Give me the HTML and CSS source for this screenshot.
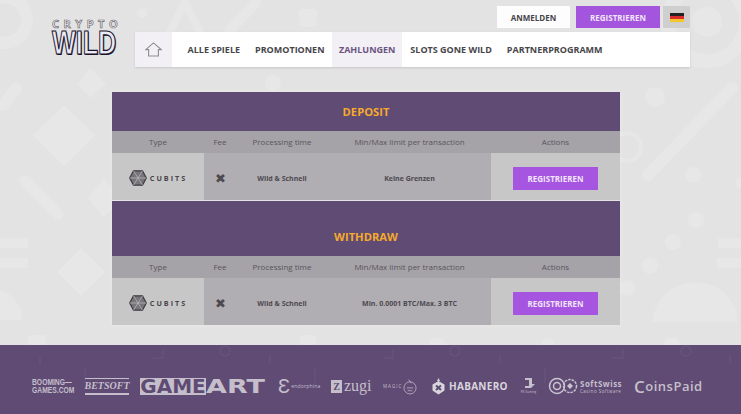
FILE: index.html
```html
<!DOCTYPE html>
<html>
  <head>
    <title>Crypto Wild - Zahlungen</title>
    <link rel="stylesheet" href="styles.css">
  </head>
  <body>
    <!-- faint shapes behind the page -->
    <svg class="bg-shapes" viewBox="0 0 741 345" width="741" height="345" fill="#e7e7e7" stroke="none">
      <!-- top left -->
      <circle cx="4" cy="20" r="23" fill="none" stroke="#e7e7e7" stroke-width="12"/>
      <circle cx="142" cy="13" r="5"/>
      <path d="M185 3 L216 62 L154 62 Z" fill="none" stroke="#e7e7e7" stroke-width="8"/>
      <rect x="299" y="9" width="18" height="18" rx="4"/>
      <path d="M256 3 L230 30" stroke="#e7e7e7" stroke-width="10" stroke-linecap="round"/>
      <circle cx="273" cy="83" r="8"/>
      <path d="M90 68 L106 84 L90 98 L78 84 Z"/>
      <!-- left column -->
      <path d="M3 105 L16 89" stroke="#e7e7e7" stroke-width="12" stroke-linecap="round"/>
      <path d="M64 105 L95 135 L64 166 L33 135 Z"/>
      <path d="M25 181 L58 214" stroke="#e7e7e7" stroke-width="11" stroke-linecap="round"/>
      <path d="M104 178 L122 198 L104 218 L88 198 Z"/>
      <rect x="0" y="238" width="28" height="10"/>
      <rect x="0" y="258" width="28" height="10"/>
      <path d="M81 248 L105 272 L81 296 L57 272 Z"/>
      <path d="M0 290 C14 294 22 306 22 320 H0 Z"/>
      <rect x="28" y="335" width="18" height="10" rx="3"/>
      <!-- right column -->
      <circle cx="707" cy="22" r="39" fill="none" stroke="#e7e7e7" stroke-width="14"/>
      <circle cx="707" cy="22" r="15"/>
      <circle cx="655" cy="97" r="10"/>
      <path d="M648 175 L732 88" stroke="#e7e7e7" stroke-width="12" stroke-linecap="round"/>
      <circle cx="627" cy="147" r="14" fill="none" stroke="#e7e7e7" stroke-width="4"/>
      <circle cx="693" cy="175" r="8"/>
      <circle cx="741" cy="183" r="6"/>
      <circle cx="696" cy="220" r="8"/>
      <circle cx="673" cy="242" r="8"/>
      <circle cx="650" cy="266" r="8"/>
      <circle cx="627" cy="288" r="8"/>
      <rect x="718" y="238" width="23" height="10"/>
      <rect x="717" y="258" width="24" height="10"/>
      <path d="M653 322 A42 39 0 0 1 738 322 Z"/>
      <circle cx="672" cy="345" r="8"/>
      <!-- under the tables -->
      <circle cx="437" cy="345" r="8"/>
      <circle cx="548" cy="345" r="7"/>
      <rect x="300" y="335" width="16" height="10" rx="3"/>
    </svg>

    <header class="site-header">
      <div class="logo">
        <div class="logo-top">CRYPTO</div>
        <div class="logo-wild">WILD</div>
      </div>
      <div class="header-right">
        <div class="top-bar">
          <a class="btn btn-login">ANMELDEN</a>
          <a class="btn btn-register">REGISTRIEREN</a>
          <div class="lang-box"><div class="flag"></div></div>
        </div>
        <nav class="main-nav">
          <a class="nav-home">
            <svg width="17" height="15" viewBox="0 0 17 15" fill="none" stroke="#8f8c94" stroke-width="1.1">
              <path d="M0.8 7.6 L8.5 0.9 L16.2 7.6 H13.4 V14 H3.6 V7.6 Z"/>
            </svg>
          </a>
          <div class="nav-links">
            <a class="nav-link">ALLE SPIELE</a>
            <a class="nav-link">PROMOTIONEN</a>
            <a class="nav-link nav-active">ZAHLUNGEN</a>
            <a class="nav-link">SLOTS GONE WILD</a>
            <a class="nav-link">PARTNERPROGRAMM</a>
          </div>
        </nav>
      </div>
    </header>

    <main class="payments">
      <h2 class="section-title deposit-title">DEPOSIT</h2>
      <div class="table-head">
        <div>Type</div>
        <div>Fee</div>
        <div>Processing time</div>
        <div>Min/Max limit per transaction</div>
        <div>Actions</div>
      </div>
      <div class="table-row">
        <div class="cell-type">
          <svg class="cubits-icon" width="18" height="16" viewBox="0 0 18 16">
            <path d="M4.5 0.8 H13.5 L17.3 8 L13.5 15.2 H4.5 L0.7 8 Z" fill="#77747a" stroke="#3f3d42" stroke-width="1.3"/>
            <path d="M9 8 L4.5 0.8 M9 8 L13.5 0.8 M9 8 H17.3 M9 8 L13.5 15.2 M9 8 L4.5 15.2 M9 8 H0.7" stroke="#b9b7bb" stroke-width="0.8"/>
          </svg>
          <span class="cubits-name">CUBITS</span>
        </div>
        <div class="cell-fee">✖</div>
        <div class="cell-text">Wild &amp; Schnell</div>
        <div class="cell-text">Keine Grenzen</div>
        <div class="cell-action"><a class="btn btn-register btn-table">REGISTRIEREN</a></div>
      </div>

      <h2 class="section-title withdraw-title">WITHDRAW</h2>
      <div class="table-head">
        <div>Type</div>
        <div>Fee</div>
        <div>Processing time</div>
        <div>Min/Max limit per transaction</div>
        <div>Actions</div>
      </div>
      <div class="table-row">
        <div class="cell-type">
          <svg class="cubits-icon" width="18" height="16" viewBox="0 0 18 16">
            <path d="M4.5 0.8 H13.5 L17.3 8 L13.5 15.2 H4.5 L0.7 8 Z" fill="#77747a" stroke="#3f3d42" stroke-width="1.3"/>
            <path d="M9 8 L4.5 0.8 M9 8 L13.5 0.8 M9 8 H17.3 M9 8 L13.5 15.2 M9 8 L4.5 15.2 M9 8 H0.7" stroke="#b9b7bb" stroke-width="0.8"/>
          </svg>
          <span class="cubits-name">CUBITS</span>
        </div>
        <div class="cell-fee">✖</div>
        <div class="cell-text">Wild &amp; Schnell</div>
        <div class="cell-text">Min. 0.0001 BTC/Max. 3 BTC</div>
        <div class="cell-action"><a class="btn btn-register btn-table">REGISTRIEREN</a></div>
      </div>
    </main>

    <footer class="providers">
      <svg class="footer-shapes" viewBox="0 0 741 69" width="741" height="69" fill="none" stroke="#67537b" stroke-width="1.5">
        <circle cx="225" cy="6" r="5"/>
        <circle cx="455" cy="6" r="5"/>
        <circle cx="686" cy="6" r="5"/>
        <path d="M163 5 V13 H153 M393 5 V13 H383 M623 5 V13 H613"/>
        <path d="M85 22 V38 M315 22 V38 M545 22 V38 M40 12 V20 M270 10 V18 M500 10 V18 M730 10 V18"/>
      </svg>
      <div class="booming">BOOMING—<br>GAMES.COM</div>
      <div class="betsoft">BETSOFT</div>
      <div class="gameart"><span class="game-box">GAME</span><span class="art">ART</span></div>
      <div class="endorphina"><span class="endo-mark">Ɛ</span><span>endorphina</span></div>
      <div class="zugi"><span class="zugi-mark">Z</span><span>zugi</span></div>
      <div class="magic">
        <span>MAGIC</span>
        <svg width="14" height="17" viewBox="0 0 15 17" fill="none" stroke="#c5bfcc" stroke-width="0.8">
          <circle cx="7.5" cy="10" r="6.5"/>
          <path d="M4 10 H11 M5 13 H10 M6 1 L9 5"/>
        </svg>
      </div>
      <div class="habanero">
        <svg width="13" height="17" viewBox="0 0 13 17">
          <path d="M6.5 0 L8 3 H5 Z M6.5 3 L12.5 6.5 V12.5 L6.5 16.5 L0.5 12.5 V6.5 Z" fill="#d9d5dd"/>
          <path d="M4 7.5 L9 12 M9 7.5 L4 12" stroke="#5f4b73" stroke-width="2"/>
        </svg>
        <span>HABANERO</span>
      </div>
      <div class="rk">
        <svg width="14" height="13" viewBox="0 0 14 13" fill="#c5bfcc">
          <path d="M3 0 H10 V6 H13 L9 10 H3 V8 H7 V2 H3 Z"/>
        </svg>
        <span>RK Gaming</span>
      </div>
      <div class="softswiss">
        <svg width="30" height="18" viewBox="0 0 30 18" fill="none" stroke="#c9c4cf" stroke-width="1.5">
          <circle cx="9" cy="9" r="7.5"/>
          <circle cx="9" cy="9" r="3.5"/>
          <circle cx="22" cy="9" r="6.5" stroke-dasharray="2.5 1"/>
          <path d="M22 6 L25 9 L22 12 L19 9 Z" fill="#c9c4cf" stroke="none"/>
        </svg>
        <div class="soft-text">SoftSwiss<small>Casino Software</small></div>
      </div>
      <div class="coinspaid"><span class="coins-c">C</span>oinsPaid</div>
    </footer>
  </body>
</html>
```

FILE: styles.css
```css
html,
body {
  margin: 0;
  padding: 0;
}

body {
  position: relative;
  width: 741px;
  height: 414px;
  overflow: hidden;
  background-color: #e3e3e3;
  font-family: "Open Sans", "Liberation Sans", sans-serif;
  color: #47454a;
}

.bg-shapes {
  position: absolute;
  top: 0;
  left: 0;
}

/* Header */
.site-header {
  position: relative;
  display: flex;
  height: 92px;
  padding: 6px 51px 0 52px;
  box-sizing: border-box;
}

.logo {
  width: 83px;
  padding-top: 12px;
}

.logo-top {
  font-size: 11px;
  line-height: 11px;
  letter-spacing: 4.5px;
  color: #ececec;
  font-weight: 700;
  -webkit-text-stroke: 0.6px #5f5b66;
}

.logo-wild {
  width: 87px;
  font-family: "Liberation Sans", sans-serif;
  font-size: 34px;
  line-height: 26px;
  font-weight: 700;
  color: #ece9f6;
  -webkit-text-stroke: 1.2px #17122a;
  text-shadow: 1px 1px 0 #17122a;
  transform: scaleX(0.74);
  transform-origin: left center;
}

.header-right {
  flex: 1;
}

.top-bar {
  display: flex;
  justify-content: flex-end;
  height: 22px;
  margin-bottom: 4px;
}

.btn {
  display: flex;
  align-items: center;
  justify-content: center;
  font-size: 8px;
  font-weight: 700;
  box-sizing: border-box;
}

.btn-login {
  width: 73px;
  margin-right: 6px;
  background-color: #fdfdfd;
  color: #47454a;
}

.btn-register {
  background-color: #a455dd;
  color: #f0e4f9;
}

.top-bar .btn-register {
  width: 84px;
  margin-right: 3px;
}

.lang-box {
  display: flex;
  align-items: center;
  justify-content: center;
  width: 27px;
  background-color: #cfcfcf;
}

.flag {
  width: 14px;
  height: 9px;
  background: linear-gradient(#222 0 33%, #d92c2c 33% 66%, #f5c52c 66%);
}

.main-nav {
  display: flex;
  height: 35px;
  background-color: #fff;
  box-shadow: 0 1px 2px rgba(0, 0, 0, 0.12);
}

.nav-home {
  display: flex;
  align-items: center;
  justify-content: center;
  width: 37px;
  margin-right: 1px;
  background-color: #f2f0f5;
}

.nav-links {
  display: flex;
  padding-left: 7px;
}

.nav-link {
  display: flex;
  align-items: center;
  padding: 0 7.5px;
  font-size: 9px;
  font-weight: 700;
  color: #47454a;
}

.nav-active {
  padding: 0 7px;
  margin-right: 0.5px;
  background-color: #f2f0f5;
  color: #6b5382;
}

/* Payment tables */
.payments {
  position: relative;
  width: 508px;
  margin-left: 112px;
  box-shadow: 0 0 5px rgba(255, 255, 255, 0.3);
}

.section-title {
  margin: 0;
  display: flex;
  justify-content: center;
  font-size: 11.2px;
  font-weight: 700;
  color: #f5aa2c;
  background-color: #5f4b73;
}

.deposit-title {
  height: 39px;
  line-height: 39px;
}

.withdraw-title {
  height: 55px;
  margin-top: 1px;
  line-height: 71px;
}

.table-head,
.table-row {
  display: grid;
  grid-template-columns: 92px 32px 92px 163px 129px;
  text-align: center;
}

.table-head {
  height: 22px;
  line-height: 21px;
  font-size: 8px;
  color: #59565c;
  background-color: #a5a2a8;
}

.table-row {
  height: 47px;
  background-color: #b0adb3;
}

.table-row > div {
  display: flex;
  align-items: center;
  justify-content: center;
  padding-top: 3px;
  box-sizing: border-box;
}

.cell-type,
.cell-action {
  background-color: #c7c7c7;
}

.cubits-icon {
  margin-right: 3px;
}

.cubits-name {
  font-size: 7.2px;
  font-weight: 700;
  letter-spacing: 2px;
  color: #47454a;
}

.cell-fee {
  font-size: 13px;
  color: #4d4a50;
}

.cell-text {
  font-size: 7px;
  font-weight: 700;
  color: #4d4a50;
}

.btn-table {
  width: 85px;
  height: 23px;
  background-color: #a655e0;
}

/* Provider logos */
.providers {
  position: absolute;
  left: 0;
  right: 0;
  top: 345px;
  height: 69px;
  box-sizing: border-box;
  display: flex;
  align-items: center;
  padding: 13px 0 0 32px;
  gap: 11px;
  background-color: #5f4b73;
  color: #c5bfcc;
}

.footer-shapes {
  position: absolute;
  top: 0;
  left: 0;
}

.providers > div {
  position: relative;
  display: flex;
  align-items: center;
  flex: none;
}

.providers > .booming {
  display: block;
  width: 42px;
  font-family: "Liberation Sans", sans-serif;
  font-size: 9px;
  line-height: 8.5px;
  font-weight: 700;
  white-space: nowrap;
  transform: scaleX(0.75);
  transform-origin: left center;
}

.betsoft {
  width: 44px;
  height: 17px;
  box-sizing: border-box;
  justify-content: center;
  font-family: "Liberation Serif", serif;
  font-size: 10px;
  font-style: italic;
  font-weight: 700;
  border-top: 1px solid #c5bfcc;
  border-bottom: 2px solid #c5bfcc;
}

.gameart {
  width: 127px;
  height: 17px;
  font-family: "DejaVu Sans", sans-serif;
  font-size: 20px;
  font-weight: 700;
  color: #c5bfcc;
}

.game-box {
  display: block;
  width: 66px;
  height: 17px;
  line-height: 17px;
  text-align: center;
  background-color: #c5bfcc;
  color: #5f4b73;
}

.art {
  display: block;
  transform: scaleX(1.35);
  transform-origin: left center;
}

.endorphina {
  width: 42px;
  font-size: 5px;
  letter-spacing: 0.2px;
}

.endo-mark {
  font-size: 20px;
  line-height: 18px;
  margin-right: 1px;
  font-weight: 400;
}

.zugi {
  width: 41px;
  font-family: "Liberation Serif", serif;
  font-size: 16px;
}

.zugi-mark {
  display: block;
  width: 11px;
  height: 13px;
  line-height: 13px;
  margin-right: 2px;
  text-align: center;
  font-size: 10px;
  font-weight: 700;
  background-color: #c5bfcc;
  color: #5f4b73;
}

.magic {
  width: 38px;
  font-size: 4.5px;
  letter-spacing: 1px;
  gap: 1px;
}

.habanero {
  width: 77px;
  font-size: 10px;
  font-weight: 700;
  letter-spacing: 0.3px;
  color: #d9d5dd;
  gap: 4px;
}

.providers > .rk {
  display: block;
  width: 17px;
  font-size: 3px;
  text-align: center;
  line-height: 3px;
}

.rk svg {
  display: block;
  margin: 0 auto;
}

.rk span {
  white-space: nowrap;
}

.softswiss {
  width: 75px;
  gap: 2px;
}

.soft-text {
  font-size: 8px;
  line-height: 9px;
  font-weight: 700;
  letter-spacing: 0.5px;
}

.soft-text small {
  display: block;
  font-size: 4.5px;
  line-height: 6px;
  font-weight: 400;
  white-space: nowrap;
}

.coinspaid {
  width: 66px;
  font-size: 13px;
  font-weight: 600;
  letter-spacing: 0.5px;
  white-space: nowrap;
}

.coins-c {
  font-size: 17px;
  line-height: 17px;
}
```
